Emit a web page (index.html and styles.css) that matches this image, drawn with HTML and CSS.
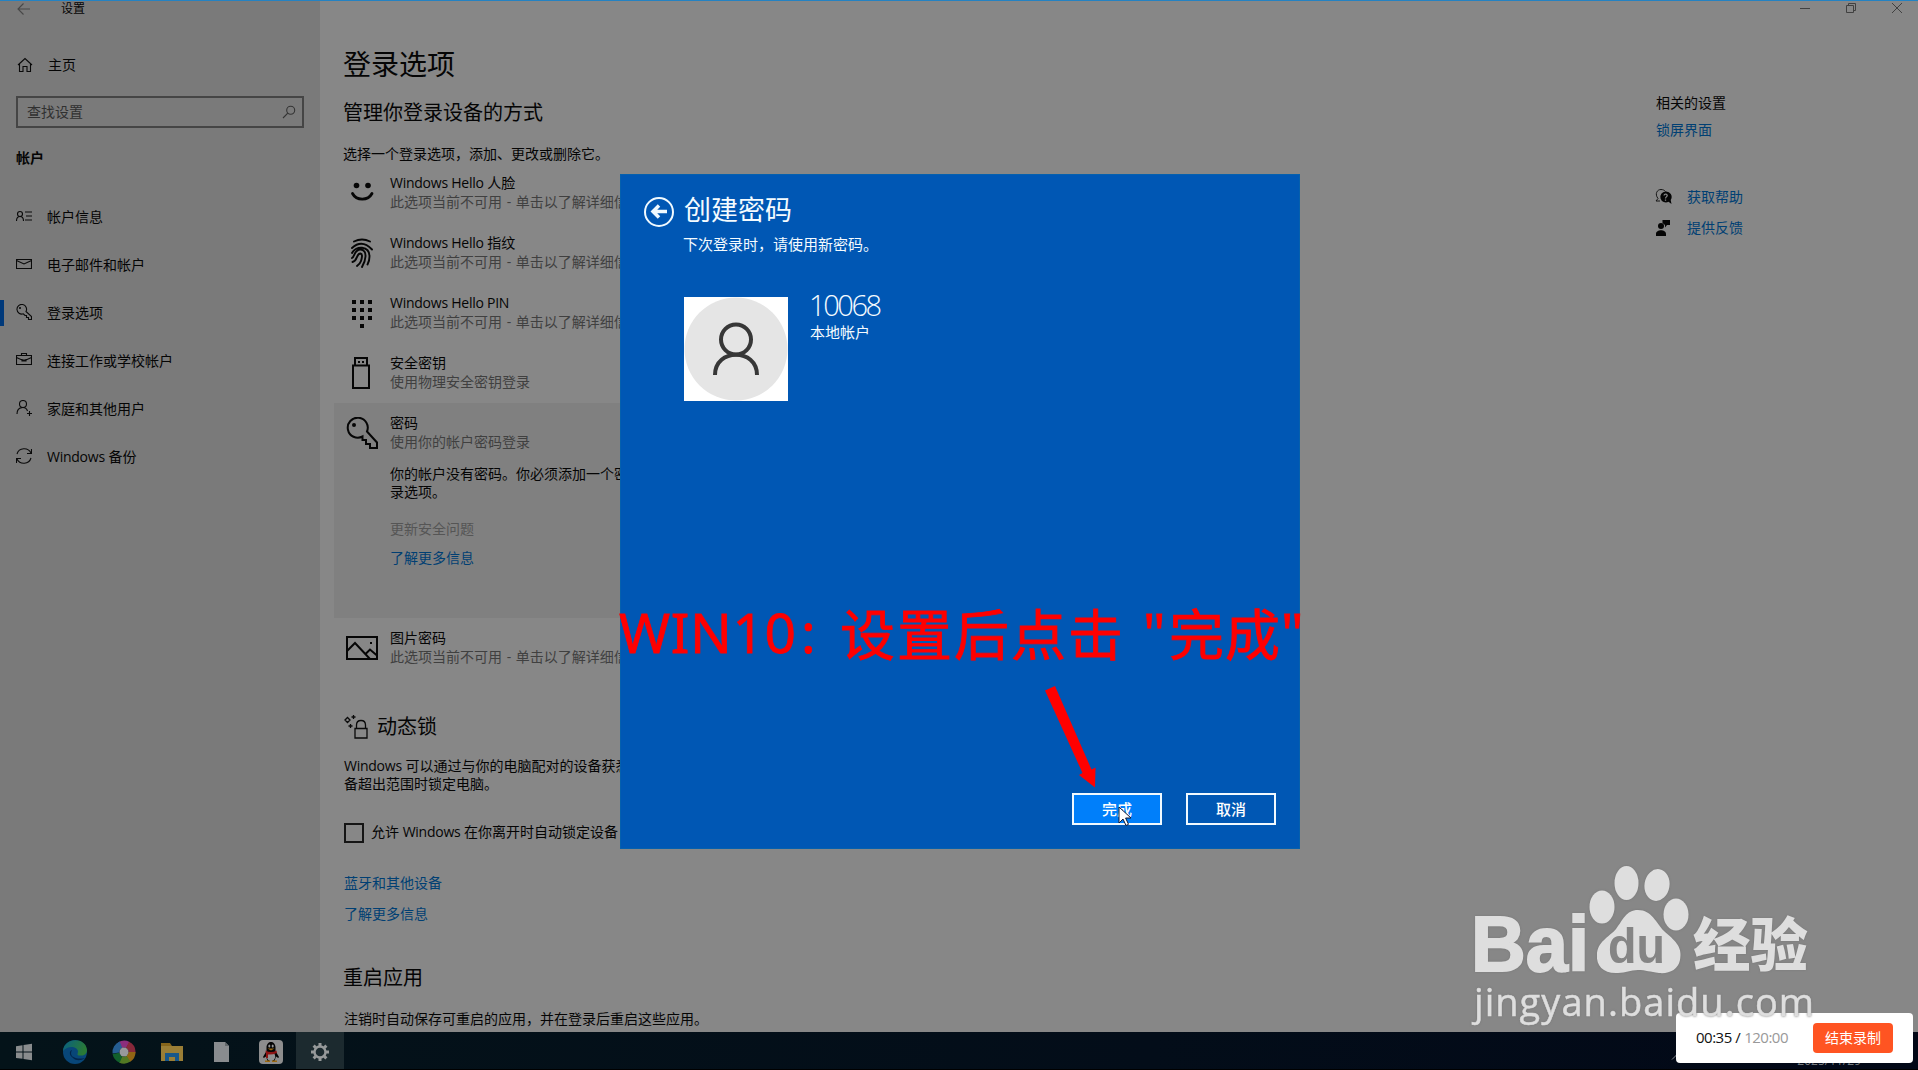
FILE: index.html
```html
<!DOCTYPE html>
<html lang="zh-CN">
<head>
<meta charset="utf-8">
<title>设置</title>
<link rel="stylesheet" href="styles.css">
</head>
<body>
<div class="desktop">
  <div class="window">
    <aside class="sidebar">
      <div class="titlebar">
        <svg class="back" width="14" height="14" viewBox="0 0 14 14"><path d="M13 7H1.5M6.5 1.5L1 7l5.500 5.500"/></svg>
        <span>设置</span>
      </div>
      <div class="home">
        <svg class="ico" width="16" height="16" viewBox="0 0 16 16"><path d="M1 8L8 1.500 15 8M2.500 7v7.500h3.500V9.500h4v5h3.500V7"/></svg>
        <span>主页</span>
      </div>
      <div class="search">
        <span>查找设置</span>
        <svg width="14" height="14" viewBox="0 0 14 14"><circle cx="8.700" cy="5.300" r="4"/><path d="M5.800 8.200L1 13"/></svg>
      </div>
      <div class="category">帐户</div>
      <nav class="nav">
        <div class="item"><svg class="ico" width="16" height="16" viewBox="0 0 16 16"><circle cx="4" cy="6" r="2.500"/><path d="M.5 13c0-6 7-6 7 0M9 4h7M10 8h6M9 12h7"/></svg><span>帐户信息</span></div>
        <div class="item"><svg class="ico" width="16" height="16" viewBox="0 0 16 16"><path d="M.5 3.500h15v9H.5zM.5 4.500L8 8l7.500-3.500"/></svg><span>电子邮件和帐户</span></div>
        <div class="item active"><svg class="ico" width="16" height="16" viewBox="0 0 16 16"><path d="M10 7.500l5.500 5v3h-3v-2h-2v-2H9L7.300 9.800A4.800 4.800 0 1 1 10 7.500z"/><circle cx="4" cy="4" r=".5"/></svg><span>登录选项</span></div>
        <div class="item"><svg class="ico" width="16" height="16" viewBox="0 0 16 16"><path d="M.5 3.500h15v9H.5zM5.500 3.500v-2h5v2M.5 5.500L6 8h4l5.500-2.500M6 7v2h4V7"/></svg><span>连接工作或学校帐户</span></div>
        <div class="item"><svg class="ico" width="16" height="16" viewBox="0 0 16 16"><circle cx="7" cy="4" r="3.500"/><path d="M1 14c0-8 9-8 10.500-3M13.500 11v5M11 13.500h5"/></svg><span>家庭和其他用户</span></div>
        <div class="item"><svg class="ico" width="16" height="16" viewBox="0 0 16 16"><path d="M1 6c2-6.500 11-7 14-1M15.500 1v4.500H11M15 10c-2 6.500-11 7-14 1M.5 15v-4.500H5"/></svg><span><span class="latin">Windows</span> 备份</span></div>
      </nav>
    </aside>
    <main class="content">
      <h1>登录选项</h1>
      <h2 class="manage">管理你登录设备的方式</h2>
      <p class="intro">选择一个登录选项，添加、更改或删除它。</p>
      <div class="option">
        <svg width="32" height="32" viewBox="0 0 32 32"><circle class="fill" cx="10.500" cy="8.500" r="2.800"/><circle class="fill" cx="22" cy="8.500" r="2.800"/><path class="smile" d="M6.500 16.500c4 7.500 15.500 7.500 19.500 0"/></svg>
        <div><b><span class="latin">Windows Hello</span> 人脸</b><i>此选项当前不可用 - 单击以了解详细信</i></div>
      </div>
      <div class="option">
        <svg class="finger" width="32" height="32" viewBox="0 0 32 32"><path d="M8 4.500q8-4 16 0M6 11q10-9 20 1.500M6 16c3.500-7.500 17.500-7.500 17.500 3.500 0 3-.6 5.500-2 8M6 21c3-1.500 2-8.500 8.500-8.500 4 0 5.200 3.500 5 7-.2 4-1.500 7-3.500 10.500M6.500 25c5.500-1.500 3.500-8.500 8-8.500 2.500.5 1.300 5 .5 7.500-.6 2-2 3.500-4 5"/></svg>
        <div><b><span class="latin">Windows Hello</span> 指纹</b><i>此选项当前不可用 - 单击以了解详细信</i></div>
      </div>
      <div class="option">
        <svg width="32" height="32" viewBox="0 0 32 32"><path class="fill" d="M6 3h4v4H6zM14 3h4v4h-4zM22 3h4v4h-4zM6 11h4v4H6zM14 11h4v4h-4zM22 11h4v4h-4zM6 19h4v4H6zM14 19h4v4h-4zM22 19h4v4h-4zM14 27h4v4h-4z"/></svg>
        <div><b><span class="latin">Windows Hello PIN</span></b><i>此选项当前不可用 - 单击以了解详细信</i></div>
      </div>
      <div class="option">
        <svg width="32" height="32" viewBox="0 0 32 32"><path d="M9 8V1h12v7M7 8.500h16V31H7z"/><path class="fill" d="M12 4h2v2h-2zM16 4h2v2h-2z"/></svg>
        <div><b>安全密钥</b><i>使用物理安全密钥登录</i></div>
      </div>
      <section class="expanded">
        <div class="option">
          <svg width="32" height="32" viewBox="0 0 32 32"><path d="M21 14.500l10 11V31h-7v-4h-4v-4h-3.500v-3.500A10 10 0 1 1 21 14.500z"/><circle class="fill" cx="8" cy="8" r="2"/></svg>
          <div><b>密码</b><i>使用你的帐户密码登录</i></div>
        </div>
        <p class="detail">你的帐户没有密码。你必须添加一个密<br>录选项。</p>
        <p class="disabled">更新安全问题</p>
        <a class="link learn">了解更多信息</a>
      </section>
      <div class="option picture">
        <svg width="32" height="32" viewBox="0 0 32 32"><path d="M1 5h30v22H1zM1 19l8-8 15 16M19.500 22L24 17.500l7 6"/><path class="fill" d="M24 10h2v2h-2z"/></svg>
        <div><b>图片密码</b><i>此选项当前不可用 - 单击以了解详细信</i></div>
      </div>
      <h2 class="dynamic">
        <svg width="24" height="24" viewBox="0 0 24 24"><path d="M11 13.500h12V23H11zM12.500 13V10c0-6 9-6 9 0v3M1 5l2.500-2.500L6 5 3.500 7.500zM9.500 0v4M7.500 2h4M6.500 9v4M4.500 11h4"/></svg>
        <span>动态锁</span>
      </h2>
      <p class="lockinfo"><span class="latin">Windows</span> 可以通过与你的电脑配对的设备获悉<br>备超出范围时锁定电脑。</p>
      <div class="check"><span class="box"></span><span>允许 <span class="latin">Windows</span> 在你离开时自动锁定设备</span></div>
      <a class="link bluetooth">蓝牙和其他设备</a>
      <a class="link more">了解更多信息</a>
      <h2 class="restart">重启应用</h2>
      <p class="restart-info">注销时自动保存可重启的应用，并在登录后重启这些应用。</p>
    </main>
    <aside class="related">
      <div class="controls">
        <svg width="12" height="12" viewBox="0 0 12 12"><path d="M1 6.500h10"/></svg>
        <svg width="12" height="12" viewBox="0 0 12 12"><path d="M1.500 3.500h7v7h-7zM3.500 3.500v-2h7v7h-2"/></svg>
        <svg width="12" height="12" viewBox="0 0 12 12"><path d="M1 1l10 10M11 1L1 11"/></svg>
      </div>
      <div class="related-title">相关的设置</div>
      <a class="link lockscreen">锁屏界面</a>
      <div class="help">
        <svg width="18" height="18" viewBox="0 0 18 18"><path class="line" d="M3 10.500C-.5 6 2 1.500 6 1.500c2 0 3.500.8 4.500 2M3 10.500L1 13h4"/><path d="M10.500 3.500a5.500 5.500 0 1 0 3 10.300l3 2.200-.8-4A5.500 5.500 0 0 0 10.500 3.500z"/><path class="question" d="M9 7.500c.3-2 3.500-1.700 3.200.2-.2 1.200-1.700 1.300-1.700 2.800M10.500 11.500v1.300"/></svg>
        <a class="link">获取帮助</a>
      </div>
      <div class="help feedback">
        <svg width="18" height="18" viewBox="0 0 18 18"><circle cx="6" cy="7" r="3"/><path d="M1 17v-2c0-5 10-5 10 0v2zM7.500 1H15v5h-3l-2 2.500V6L7.500 4z"/></svg>
        <a class="link">提供反馈</a>
      </div>
    </aside>
  </div>

  <footer class="taskbar">
    <div class="app"><svg width="24" height="24" viewBox="0 0 24 24"><path fill="#898c8d" d="M4 6.200l6.500-1v6.300H4zM11.500 5L20 3.800v7.700h-8.500zM4 12.500h6.500v6.300L4 17.900zM11.500 12.500H20v7.700L11.500 19z"/></svg></div>
    <div class="app"><svg width="24" height="24" viewBox="0 0 24 24"><defs><linearGradient id="edge" x1="0" y1="0" x2="1" y2=".3"><stop offset="0" stop-color="#086083"/><stop offset="1" stop-color="#2a7a35"/></linearGradient></defs><circle cx="12" cy="12" r="12" fill="#084678"/><path fill="url(#edge)" d="M0 11C1-3 23-3 24 10c0 4-3 6-7 5.500-4 0-2-2-2-4 0-5-10-7-15-.500z"/><path fill="#03254a" d="M9 10c-4 7 5 10 13 8-4 3-9 3-12 0-4-3-4-7-1-8z"/></svg></div>
    <div class="app"><svg width="24" height="24" viewBox="0 0 24 24"><g fill="none" stroke-width="7"><path stroke="#8b2d7c" d="M8 5.300A8 8 0 0 1 16 5"/><path stroke="#87283a" d="M15.500 4.800A8 8 0 0 1 19.900 13"/><path stroke="#926514" d="M20 12a8 8 0 0 1-4 7"/><path stroke="#527923" d="M16.500 18.700a8 8 0 0 1-8 .600"/><path stroke="#12602c" d="M9 19.400a8 8 0 0 1-5-6"/><path stroke="#255d91" d="M4 13a8 8 0 0 1 5-8.300"/></g><circle cx="12" cy="12" r="4.500" fill="#98999c"/></svg></div>
    <div class="app"><svg width="24" height="24" viewBox="0 0 24 24"><path fill="#85651b" d="M1 3h9l2 3h11v15H1z"/><path fill="#9a7e36" d="M1 6h22v15H1z"/><path fill="#18578a" d="M5 13h14v8h-4v-4H9v4H5z"/></svg></div>
    <div class="app"><svg width="24" height="24" viewBox="0 0 24 24"><path fill="#898c8f" d="M4 2h11l4 4v16H4z"/><path fill="#63686b" d="M15 2v4h4z"/></svg></div>
    <div class="app"><svg width="24" height="24" viewBox="0 0 24 24"><rect width="24" height="24" rx="4" fill="#8d8d8d"/><path fill="#050505" d="M7.500 11V7.500c0-7.500 9-7.500 9 0V11l3.500 6-.8 1-2.200-1.500-1.500 4.500h-7L7 16.500 4.800 18 4 17z"/><ellipse cx="12" cy="16.500" rx="4.200" ry="4.500" fill="#929292"/><path fill="#8d1414" d="M6.500 10.500q5.500 3 11 0l.5 2.500q-5 2-9 1.500V18H7v-4.500z"/><path fill="#9a6811" d="M8.500 8.500h7L12 10.500zM6 20.500h5V22H6zM13 20.500h5V22h-5z"/><ellipse cx="10.300" cy="6" rx="1" ry="1.500" fill="#999"/><ellipse cx="13.700" cy="6" rx="1" ry="1.500" fill="#999"/></svg></div>
    <div class="app current"><svg width="24" height="24" viewBox="0 0 24 24"><g fill="none" stroke="#96999a"><circle cx="12" cy="12" r="5.500" stroke-width="2.400"/><path stroke-width="3" d="M12 3v3M12 18v3M3 12h3M18 12h3M5.600 5.600l2.200 2.200M16.200 16.200l2.200 2.200M18.400 5.600l-2.200 2.200M7.800 16.200l-2.200 2.200"/></g></svg></div>
    <div class="tray"><svg width="12" height="8" viewBox="0 0 12 8"><path d="M1 6.500l5-5 5 5"/></svg><span>2025/11/29</span></div>
  </footer>

  <div class="dialog">
    <header>
      <svg width="32" height="32" viewBox="0 0 32 32"><circle cx="16" cy="16" r="14"/><path d="M24 15.500H10M16 9.500l-6 6 6 6"/></svg>
      <h2>创建密码</h2>
    </header>
    <p>下次登录时，请使用新密码。</p>
    <div class="account">
      <svg width="104" height="104" viewBox="0 0 104 104"><path fill="#fff" d="M0 0h104v104H0z"/><circle cx="52" cy="52" r="51.500" fill="#e5e5e5"/><g fill="none" stroke="#373737" stroke-width="4"><circle cx="52" cy="42.500" r="15"/><path d="M31 78c0-27 42-27 42 0"/></g></svg>
      <div><strong>10068</strong><span>本地帐户</span></div>
    </div>
    <div class="actions"><button class="primary">完成</button><button>取消</button></div>
  </div>

  <svg class="annotation" width="690" height="200" viewBox="0 0 690 200">
    <g class="caption">
      <text x="-1" y="52" textLength="177" lengthAdjust="spacing">WIN10</text>
      <text x="181" y="52">:</text>
      <text x="220" y="54" textLength="283" lengthAdjust="spacing">设置后点击</text>
      <text x="523" y="52">"</text>
      <text x="549" y="54" textLength="111" lengthAdjust="spacing">完成</text>
      <text x="661" y="52">"</text>
    </g>
    <path fill="#f00" d="M425 89.500l10-4.500 36.500 83.500 4-2-.5 20-16-12.500 3.500-2z"/>
  </svg>
  <svg class="cursor" width="14" height="21" viewBox="0 0 14 21"><path d="M1 1v16l4-4 3 6.500 2.500-1.200L7.600 12H13z"/></svg>

  <svg class="watermark" width="370" height="190" viewBox="0 0 370 190">
    <g fill="#dedede">
      <text class="logo" x="1" y="110" textLength="118" lengthAdjust="spacingAndGlyphs">Bai</text>
      <ellipse cx="132" cy="46" rx="12.500" ry="16.500"/><ellipse cx="156.500" cy="22" rx="12" ry="17"/>
      <ellipse cx="187" cy="24" rx="12.500" ry="16" transform="rotate(9 187 24)"/><ellipse cx="206" cy="53.500" rx="12.500" ry="16"/>
      <path d="M168 49c14 0 18 13 26 21 10 9 19 15 16 29-2 10-11 14-21 13-9-1-13-3-21-3s-12 3-20 3c-14 1-22-7-21-18 0-13 12-18 19-26 7-9 10-19 22-19z"/>
      <text class="hanzi" x="223" y="105" textLength="115" lengthAdjust="spacingAndGlyphs">经验</text>
      <text class="url" x="4" y="155" textLength="340" lengthAdjust="spacing">jingyan.baidu.com</text>
    </g>
    <text class="du" x="138" y="102" textLength="57" lengthAdjust="spacingAndGlyphs">du</text>
  </svg>
  <div class="recorder"><span>00:35 /</span><em>120:00</em><button>结束录制</button></div>
</div>
</body>
</html>
```
FILE: styles.css
```css
* { box-sizing: border-box; }
body { margin: 0; overflow: hidden; }
h1, h2, p { margin: 0; font-weight: 400; }
button { font: inherit; padding: 0; }
svg { display: block; flex: none; }

.desktop {
  position: relative;
  display: flex;
  flex-direction: column;
  width: 1918px;
  height: 1070px;
  overflow: hidden;
  background: #878787;
  border-top: 1px solid #2482c2;
  color: #050505;
  font: 14px/18px "Open Sans", "Noto Sans CJK SC", sans-serif;
  white-space: nowrap;
}
.latin { letter-spacing: -.25px; }
.window { display: flex; height: 1031px; }

.sidebar { width: 320px; background: #7a7a7a; }
.titlebar { display: flex; align-items: center; gap: 30px; height: 15px; padding-left: 17px; font-size: 12px; line-height: 14px; }
.back { fill: none; stroke: #484848; stroke-width: 1.1; }
.home { display: flex; align-items: center; gap: 15px; height: 32px; margin-top: 33px; padding-left: 17px; }
.ico { fill: none; stroke: #0a0a0a; stroke-width: 1.1; }
.search {
  display: flex; align-items: center; justify-content: space-between;
  height: 32px; margin: 15px 16px 0; padding: 0 6px 1px 9px;
  border: 2px solid #454545; color: #303030;
}
.search svg { fill: none; stroke: #343434; stroke-width: 1.1; }
.category { height: 20px; margin: 20px 0 0 16px; line-height: 20px; font-weight: 700; }
.nav { margin-top: 25px; }
.item { display: flex; align-items: center; gap: 15px; height: 48px; padding-left: 16px; }
.item svg { margin-top: -2px; }
.active { padding-left: 12px; border-style: solid; border-width: 0 0 0 4px; border-image: linear-gradient(transparent 24%, #00397a 24%, #00397a 75%, transparent 75%) 1; }

.content { width: 1336px; }
h1 { height: 40px; margin: 43px 0 0 23px; font-size: 28px; line-height: 40px; }
h2 { font-size: 20px; line-height: 28px; }
.manage { margin: 15px 0 0 23px; }
.intro { margin: 18px 0 0 23px; }
.option { display: flex; gap: 13px; height: 60px; padding-top: 11px; }
.content > .option { margin-left: 14px; padding-left: 10px; }
.option svg { margin: 3px 0 0 2px; fill: none; stroke: #060606; stroke-width: 2; }
.option b, .option i { display: block; margin-left: -1px; font-style: normal; font-weight: 400; line-height: 18px; }
.option i { margin-top: 1px; color: #404040; word-spacing: 1px; }
.option .fill { fill: #060606; stroke: none; }
.option .smile { stroke-width: 2.8; stroke-linecap: round; }
.option .finger { stroke-width: 1.9; stroke-linecap: round; }
.intro + .option { padding-top: 11px; }
.expanded { width: 940px; height: 215px; margin-left: 14px; padding-left: 10px; background: #808080; }
.detail { margin: 2px 0 0 46px; }
.disabled { margin: 19px 0 0 46px; color: #555; }
.link { display: block; color: #003f73; }
.learn { margin: 11px 0 0 46px; }
.dynamic { display: flex; gap: 9px; align-items: center; height: 28px; margin: 35px 0 0 24px; }
.dynamic svg { fill: none; stroke: #0a0a0a; stroke-width: 1.300; }
.lockinfo { margin: 16px 0 0 24px; }
.check { display: flex; align-items: center; gap: 7px; height: 20px; margin: 30px 0 0 24px; }
.check > span:last-child { margin-top: -2px; }
.box { width: 20px; height: 20px; border: 2px solid #151515; }
.bluetooth { margin: 31px 0 0 24px; }
.more { margin: 13px 0 0 24px; }
.restart { margin: 41px 0 0 23px; }
.restart-info { margin: 18px 0 0 24px; }

.related { width: 262px; }
.controls { display: flex; gap: 34px; height: 15px; padding: 1px 0 0 143px; }
.controls svg { fill: none; stroke: #414141; stroke-width: 1; }
.related-title { margin-top: 78px; }
.lockscreen { margin-top: 9px; }
.help { display: flex; align-items: center; gap: 13px; height: 18px; margin-top: 49px; }
.help svg { margin-left: -1px; margin-right: 1px; fill: #050505; }
.help .line { fill: none; stroke: #151515; }
.help .question { fill: none; stroke: #858585; stroke-width: 1.300; }
.feedback { margin-top: 13px; }

.taskbar { display: flex; height: 38px; background: linear-gradient(90deg, #041319, #030d19 60%, #020817); border-bottom: 1px solid #000; }
.app { display: flex; align-items: center; justify-content: center; padding-top: 2px; width: 48px; }
.app:nth-child(2) { width: 54px; }
.app:nth-child(3) { width: 44px; }
.app:nth-child(4) { width: 52px; }
.app:nth-child(6) { width: 50px; }
.app.current { background: #1c2a2f; }
.tray { display: flex; gap: 114px; margin-left: auto; padding: 20px 57px 0 0; font-size: 12px; color: #777b80; }
.tray svg { margin-top: 1px; fill: none; stroke: #8a8e92; }

.dialog {
  position: absolute; left: 620px; top: 173px;
  display: flex; flex-direction: column;
  width: 680px; height: 675px; padding: 19px 23px 23px;
  background: #0057b4; color: #f4fbff; border: 1px solid #0560ad;
}
.dialog header { display: flex; gap: 9px; height: 38px; }
.dialog header svg { margin: 2px 0 0 -1px; fill: none; stroke: #f0faff; stroke-width: 2; }
.dialog header path { stroke-width: 3.500; }
.dialog h2 { margin-top: -2px; font-size: 27px; line-height: 36px; }
.dialog p { margin: 2px 0 0 39px; font-size: 15px; line-height: 20px; }
.account { display: flex; gap: 22px; margin: 43px 0 0 40px; }
.account div { display: flex; flex-direction: column; margin-top: -8px; }
.account strong { margin-left: -1px; font: 300 29px/32px "Open Sans", sans-serif; letter-spacing: -2.400px; }
.account span { margin-top: 1px; font-size: 15px; line-height: 20px; }
.actions { display: flex; justify-content: flex-end; gap: 24px; margin-top: auto; }
.actions button { width: 90px; height: 32px; border: 2px solid #f0f9ff; background: transparent; color: #fff; font-size: 15px; font-weight: 500; line-height: 24px; }
.actions .primary { background: #007ffa; }

.annotation { position: absolute; left: 620px; top: 600px; overflow: visible; }
.caption { fill: #f00; stroke: #f00; stroke-width: .8; font: 55px "Noto Sans", "Noto Sans CJK SC", sans-serif; }
.cursor { position: absolute; left: 1118px; top: 805px; fill: #fff; stroke: #111833; stroke-width: 1; }

.watermark { position: absolute; left: 1470px; top: 860px; z-index: 2; filter: drop-shadow(0 0 1px #777); }
.logo { font: 700 78px "Liberation Sans", sans-serif; stroke: #dedede; stroke-width: 2; }
.hanzi { font: 900 58px "Noto Sans CJK SC", sans-serif; }
.url { font: 38px "Open Sans", sans-serif; stroke: #dedede; stroke-width: .5; }
.du { fill: #858585; font: 700 50px "Liberation Sans", sans-serif; }
.recorder {
  position: absolute; left: 1676px; top: 1012px;
  display: flex; align-items: center;
  width: 237px; height: 50px; padding: 0 20px;
  border-radius: 4px; background: #fff; color: #111; font-size: 15px; letter-spacing: -.5px;
}
.recorder span, .recorder em { margin-top: -2px; }
.recorder em { margin-left: 4px; font-style: normal; color: #999; }
.recorder button { width: 80px; height: 30px; margin-left: auto; border: 0; border-radius: 4px; background: #ff5422; color: #fff; font-size: 14px; letter-spacing: 0; }
```
